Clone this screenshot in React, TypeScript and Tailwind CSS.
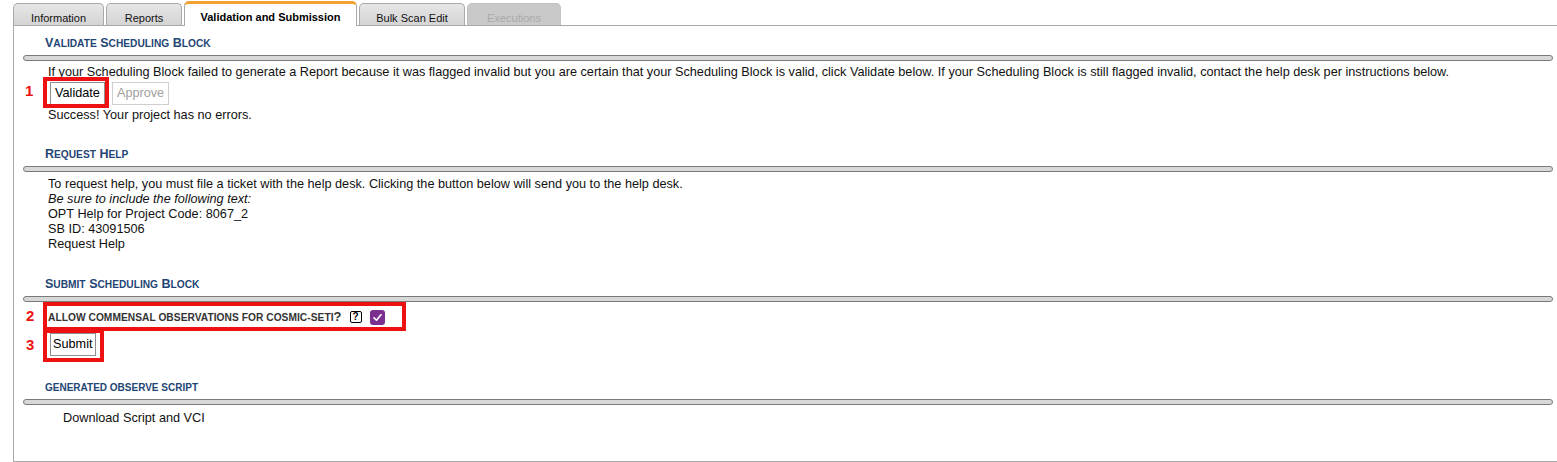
import React from "react";

const FONT = { fontFamily: '"Liberation Sans", Arial, Helvetica, sans-serif' };

function Tab({ label, w, active, disabled }: { label: string; w: string; active?: boolean; disabled?: boolean }) {
  if (active) {
    return (
      <div
        className={`${w} h-[25px] -mb-px bg-white border-x border-[#a9a9a9] border-t-[3px] border-t-[#f3a232] rounded-t-[5px] flex justify-center pt-[7px] text-[11px] leading-[13px] font-bold text-black`}
      >
        {label}
      </div>
    );
  }
  return (
    <div
      className={`${w} h-[22px] border border-b-0 rounded-t-[5px] flex justify-center pt-[8px] text-[11px] leading-[13px] ${
        disabled
          ? "bg-[#c9c9c9] border-[#c2c2c2] text-[#a9a9a9]"
          : "bg-gradient-to-b from-[#e6e6e6] to-[#d4d4d4] border-[#a9a9a9] text-[#111]"
      }`}
    >
      {label}
    </div>
  );
}

function SmallCaps({ text }: { text: string }) {
  const words = text.split(" ");
  return (
    <>
      {words.map((w, i) => (
        <React.Fragment key={i}>
          {i > 0 ? " " : null}
          <span className="text-[12.5px]">{w[0]}</span>
          <span className="text-[10.2px] uppercase">{w.slice(1)}</span>
        </React.Fragment>
      ))}
    </>
  );
}

function Heading({ children, className = "" }: { children: React.ReactNode; className?: string }) {
  return (
    <div className={`pl-[31px] h-[15px] leading-[15px] font-bold text-[#1f4675] ${className}`}>
      {children}
    </div>
  );
}

function Bar() {
  return <div className="ml-[9px] mr-[4px] mt-[4px] h-[6px] rounded-full bg-[#d8d8d8] border border-[#7a7a7a]" />;
}

function RedNum({ n, className }: { n: string; className: string }) {
  return (
    <span className={`absolute text-[15px] font-bold text-[#ee1111] leading-none ${className}`}>{n}</span>
  );
}

export default function App() {
  return (
    <div className="w-[1557px] h-[462px] bg-white overflow-hidden" style={FONT}>
      {/* Tabs */}
      <div className="ml-[13px] h-[26px] flex items-end gap-[2px] border-b border-[#a9a9a9]">
        <Tab label="Information" w="w-[91px]" />
        <Tab label="Reports" w="w-[76px]" />
        <Tab label="Validation and Submission" w="w-[173px]" active />
        <Tab label="Bulk Scan Edit" w="w-[106px]" />
        <Tab label="Executions" w="w-[94px]" disabled />
      </div>

      {/* Panel */}
      <div className="ml-[13px] h-[436px] border-l border-b border-[#a9a9a9] pt-[10px] text-[12.7px] text-[#111]">
        {/* Validate */}
        <Heading>
          <SmallCaps text="Validate Scheduling Block" />
        </Heading>
        <Bar />
        <div className="pl-[34px] mt-[4px] leading-[15px]">
          If your Scheduling Block failed to generate a Report because it was flagged invalid but you are certain that your
          Scheduling Block is valid, click Validate below. If your Scheduling Block is still flagged invalid, contact the help
          desk per instructions below.
        </div>
        <div className="pl-[36px] mt-[2px] flex items-center gap-[5px]">
          <div className="relative">
            <button className="h-[23px] px-[4px] bg-white border border-[#8f8f8f] text-[12.7px] text-black leading-none" style={FONT}>
              Validate
            </button>
            <div className="absolute left-[-7px] top-[-5px] w-[66px] h-[31px] border-[4px] border-[#ee1111] pointer-events-none" />
            <RedNum n="1" className="left-[-25px] top-[1px]" />
          </div>
          <button
            className="h-[23px] px-[4px] ml-[2px] bg-white border border-[#cfcfcf] text-[12.7px] text-[#a0a0a0] leading-none"
            style={FONT}
          >
            Approve
          </button>
        </div>
        <div className="pl-[34px] mt-[3px] leading-[15px]">Success! Your project has no errors.</div>

        {/* Request Help */}
        <Heading className="mt-[24px]">
          <SmallCaps text="Request Help" />
        </Heading>
        <Bar />
        <div className="pl-[34px] mt-[5px] leading-[15px]">
          <div>
            To request help, you must file a ticket with the help desk. Clicking the button below will send you to the help desk.
          </div>
          <div className="italic">Be sure to include the following text:</div>
          <div>OPT Help for Project Code: 8067_2</div>
          <div>SB ID: 43091506</div>
          <div>Request Help</div>
        </div>

        {/* Submit */}
        <Heading className="mt-[25px]">
          <SmallCaps text="Submit Scheduling Block" />
        </Heading>
        <Bar />
        <div className="relative pl-[34px] mt-[6px] h-[18px] flex items-center">
          <span className="text-[10.2px] font-bold text-[#333] uppercase tracking-[0.05px]">
            allow commensal observations for cosmic-seti<span className="text-[13px] tracking-normal">?</span>
          </span>
          <span className="ml-[8px] w-[12px] h-[12px] border border-black rounded-[2px] flex items-center justify-center text-[10px] font-bold leading-none text-black">
            ?
          </span>
          <span className="ml-[8px] w-[15px] h-[15px] rounded-[3px] bg-[#7b2f8f] flex items-center justify-center">
            <svg width="11" height="11" viewBox="0 0 12 12" fill="none">
              <path d="M2.2 6.4 L4.9 9 L9.8 3" stroke="white" strokeWidth="1.8" strokeLinecap="round" strokeLinejoin="round" />
            </svg>
          </span>
          <div className="absolute left-[29px] top-[-6px] w-[363px] h-[29px] border-[4px] border-[#ee1111] pointer-events-none" />
          <RedNum n="2" className="left-[12px] top-[0px]" />
        </div>
        <div className="pl-[36px] mt-[7px]">
          <div className="relative inline-block align-top">
            <button className="h-[23px] px-[2px] bg-white border border-[#8f8f8f] text-[12.7px] text-black leading-none" style={FONT}>
              Submit
            </button>
            <div className="absolute left-[-7px] top-[-4px] w-[61px] h-[33px] border-[4px] border-[#ee1111] pointer-events-none" />
            <RedNum n="3" className="left-[-24px] top-[4px]" />
          </div>
        </div>

        {/* Generated observe script */}
        <Heading className="mt-[24px]">
          <span className="text-[10px] uppercase">generated observe script</span>
        </Heading>
        <Bar />
        <div className="pl-[49px] mt-[6px] leading-[15px]">Download Script and VCI</div>
      </div>
    </div>
  );
}
